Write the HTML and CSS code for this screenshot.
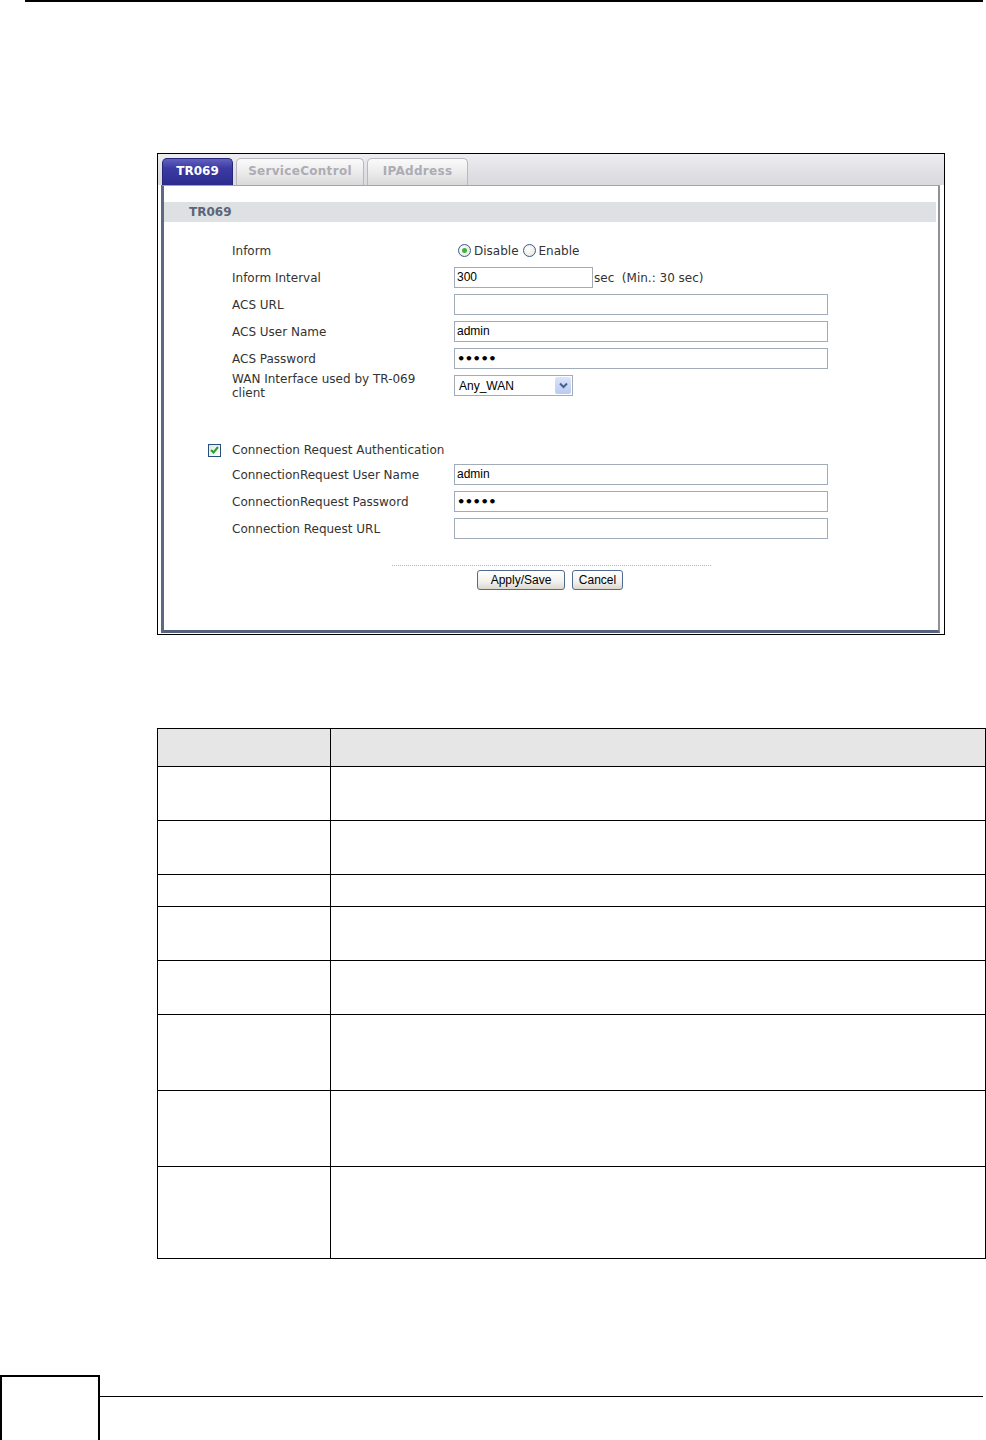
FILE: index.html
```html
<!DOCTYPE html>
<html lang="en">
<head>
  <meta charset="UTF-8">
  <title>TR069 Client</title>
  <meta name="viewport" content="width=device-width, initial-scale=1.0">
  <link rel="stylesheet" href="styles.css">
</head>
<body>

<div class="top-rule"></div>

<div class="shot">
  <div class="tabs">
    <div class="tab active">TR069</div>
    <div class="tab tab-service">ServiceControl</div>
    <div class="tab tab-ip">IPAddress</div>
  </div>

  <div class="panel">
    <div class="section-title">TR069</div>

    <div class="form">
      <div class="row">
        <div class="label">Inform</div>
        <div class="field">
          <span class="radio on"></span><span class="opt">Disable</span>
          <span class="radio"></span><span class="opt">Enable</span>
        </div>
      </div>
      <div class="row">
        <div class="label">Inform Interval</div>
        <div class="field">
          <input class="text short" type="text" value="300">
          <span class="hint">sec &nbsp;(Min.: 30 sec)</span>
        </div>
      </div>
      <div class="row">
        <div class="label">ACS URL</div>
        <div class="field"><input class="text long" type="text" value=""></div>
      </div>
      <div class="row">
        <div class="label">ACS User Name</div>
        <div class="field"><input class="text long" type="text" value="admin"></div>
      </div>
      <div class="row">
        <div class="label">ACS Password</div>
        <div class="field"><input class="text long" type="password" value="admin"></div>
      </div>
      <div class="row">
        <div class="label">WAN Interface used by TR-069 client</div>
        <div class="field">
          <div class="select">
            <span class="select-value">Any_WAN</span>
            <span class="select-arrow">
              <svg width="9" height="7" viewBox="0 0 9 7"><path d="M1 1.5 L4.5 5 L8 1.5" fill="none" stroke="#4a5f8c" stroke-width="2"/></svg>
            </span>
          </div>
        </div>
      </div>

      <div class="row check-row">
        <span class="checkbox">
          <svg width="9" height="8" viewBox="0 0 9 8"><path d="M1 4 L3.5 6.5 L8 1" fill="none" stroke="#26a12a" stroke-width="2"/></svg>
        </span>
        <span class="check-label">Connection Request Authentication</span>
      </div>
      <div class="row">
        <div class="label">ConnectionRequest User Name</div>
        <div class="field"><input class="text long" type="text" value="admin"></div>
      </div>
      <div class="row">
        <div class="label">ConnectionRequest Password</div>
        <div class="field"><input class="text long" type="password" value="admin"></div>
      </div>
      <div class="row">
        <div class="label">Connection Request URL</div>
        <div class="field"><input class="text long" type="text" value=""></div>
      </div>
    </div>

    <div class="actions">
      <div class="dots"></div>
      <div class="buttons">
        <button class="btn btn-apply">Apply/Save</button>
        <button class="btn btn-cancel">Cancel</button>
      </div>
    </div>
  </div>
</div>

<table class="desc">
  <tr class="head"><th class="col-label"></th><th></th></tr>
  <tr class="r54"><td></td><td></td></tr>
  <tr class="r54"><td></td><td></td></tr>
  <tr class="r32"><td></td><td></td></tr>
  <tr class="r54"><td></td><td></td></tr>
  <tr class="r54"><td></td><td></td></tr>
  <tr class="r76"><td></td><td></td></tr>
  <tr class="r76"><td></td><td></td></tr>
  <tr class="r92"><td></td><td></td></tr>
</table>

<div class="footer">
  <div class="page-box"></div>
  <div class="footer-line"></div>
</div>

</body>
</html>
```

FILE: styles.css
```css
body {
  margin: 0;
  background: #fff;
  color: #000;
  font-family: "Liberation Sans", Arial, sans-serif;
}
.top-rule {
  margin-left: 25px;
  width: 958px;
  border-top: 2px solid #000;
}

/* screenshot of the router page */
.shot {
  margin: 151px 0 0 157px;
  width: 788px;
  height: 482px;
  box-sizing: border-box;
  border: 1px solid #000;
  background: #fff;
  display: flex;
  flex-direction: column;
}
.tabs {
  height: 31px;
  box-sizing: border-box;
  padding: 4px 0 0 4px;
  display: flex;
  gap: 3px;
  background: linear-gradient(#eeeef1, #e0e0e4 60%, #d9d9de);
}
.tab {
  height: 27px;
  box-sizing: border-box;
  border: 1px solid #b8b8be;
  border-bottom: none;
  border-radius: 5px 5px 0 0;
  background: linear-gradient(#fafafa, #ececec 50%, #d9d9db);
  color: #acacb4;
  font-family: "DejaVu Sans", Verdana, sans-serif;
  font-size: 12px;
  font-weight: bold;
  letter-spacing: 0.3px;
  text-align: center;
  line-height: 25px;
}
.tab.active {
  width: 71px;
  border-color: #25257a;
  background: linear-gradient(#6262c0, #3b3ba4 35%, #2c2c8e);
  color: #fff;
  letter-spacing: 0;
}
.tab-service {
  width: 128px;
}
.tab-ip {
  width: 101px;
}
.panel {
  flex: 1;
  margin: 0 4px 1px 3px;
  background: #fff;
  border-top: 1px solid #a4a4ac;
  border-left: 3px solid #5c6884;
  border-bottom: 3px solid #56627e;
  border-right: 2px solid #909098;
}
.section-title {
  margin: 16px 2px 0 0;
  height: 20px;
  padding-left: 25px;
  background: #dde1e3;
  color: #5b6577;
  font-family: "DejaVu Sans", Verdana, sans-serif;
  font-size: 12px;
  font-weight: bold;
  line-height: 21px;
}
.form {
  margin-top: 15px;
}
.row {
  display: flex;
  align-items: center;
  height: 27px;
  padding-left: 68px;
}
.label, .check-label {
  flex: none;
  color: #333;
  font-family: "DejaVu Sans", Verdana, sans-serif;
  font-size: 12px;
  line-height: 14px;
}
.label {
  width: 222px;
  box-sizing: border-box;
  padding-right: 18px;
}
.field {
  display: flex;
  align-items: center;
}
.opt, .hint {
  color: #333;
  font-family: "DejaVu Sans", Verdana, sans-serif;
  font-size: 12px;
}
.hint {
  margin-left: 1px;
}
.radio {
  width: 13px;
  height: 13px;
  box-sizing: border-box;
  border: 1px solid #3d5a7f;
  border-radius: 50%;
  background: radial-gradient(circle at 40% 40%, #fff, #e2e2dc);
  margin: 0 3px 0 4px;
  display: flex;
  align-items: center;
  justify-content: center;
}
.radio.on::after {
  content: "";
  width: 5px;
  height: 5px;
  border-radius: 50%;
  background: #3fb33a;
}
.opt + .radio {
  margin-left: 4px;
}
.text {
  height: 21px;
  box-sizing: border-box;
  margin: 0;
  padding: 0 2px 1px;
  border: 1px solid #a2acb8;
  border-radius: 0;
  background: #fff;
  color: #000;
  font-family: "Liberation Sans", Arial, sans-serif;
  font-size: 12px;
  outline: none;
}
.text.short {
  width: 139px;
}
.text.long {
  width: 374px;
}
input[type="password"] {
  font-family: "DejaVu Sans", sans-serif;
  font-size: 13px;
  font-weight: bold;
  letter-spacing: -0.5px;
}
.select {
  width: 119px;
  height: 21px;
  box-sizing: border-box;
  border: 1px solid #a2acb8;
  display: flex;
  align-items: center;
  justify-content: space-between;
  background: #fff;
}
.select-value {
  padding-left: 4px;
  font-size: 12px;
  color: #000;
}
.select-arrow {
  width: 16px;
  height: 17px;
  margin-right: 1px;
  border-radius: 2px;
  background: linear-gradient(#dbe5fb, #b9cbf2);
  display: flex;
  align-items: center;
  justify-content: center;
}
.check-row {
  margin-top: 38px;
  height: 24px;
  padding-left: 44px;
  padding-top: 2px;
  box-sizing: border-box;
}
.checkbox {
  width: 13px;
  height: 13px;
  box-sizing: border-box;
  border: 1px solid #27507f;
  background: linear-gradient(135deg, #e6e6e0, #fff);
  margin-right: 11px;
  display: flex;
  align-items: center;
  justify-content: center;
}
.actions {
  margin-top: 23px;
}
.dots {
  width: 319px;
  margin: 0 auto;
  border-top: 1px dotted #b8b8b8;
}
.buttons {
  margin-top: 4px;
  display: flex;
  justify-content: center;
  gap: 7px;
  padding-right: 2px;
}
.btn {
  height: 20px;
  box-sizing: border-box;
  margin: 0;
  padding: 0;
  border: 1px solid #4f6a93;
  border-radius: 3px;
  background: linear-gradient(#ffffff, #f2f1ec 60%, #dcd8cd);
  color: #000;
  font-family: "Liberation Sans", Arial, sans-serif;
  font-size: 12px;
}
.btn-apply {
  width: 88px;
}
.btn-cancel {
  width: 51px;
}

/* field description table */
.desc {
  margin: 93px 0 0 157px;
  width: 829px;
  border-collapse: collapse;
}
.desc th, .desc td {
  border: 1px solid #000;
  padding: 0;
}
.desc .col-label {
  width: 172px;
}
.desc .head {
  height: 38px;
  background: #e6e6e6;
}
.r32 { height: 32px; }
.r54 { height: 54px; }
.r76 { height: 76px; }
.r92 { height: 92px; }

.footer {
  margin-top: 116px;
  display: flex;
}
.page-box {
  width: 100px;
  height: 70px;
  box-sizing: border-box;
  border: 2px solid #000;
}
.footer-line {
  width: 883px;
  margin-top: 21px;
  border-top: 1px solid #000;
}
```
